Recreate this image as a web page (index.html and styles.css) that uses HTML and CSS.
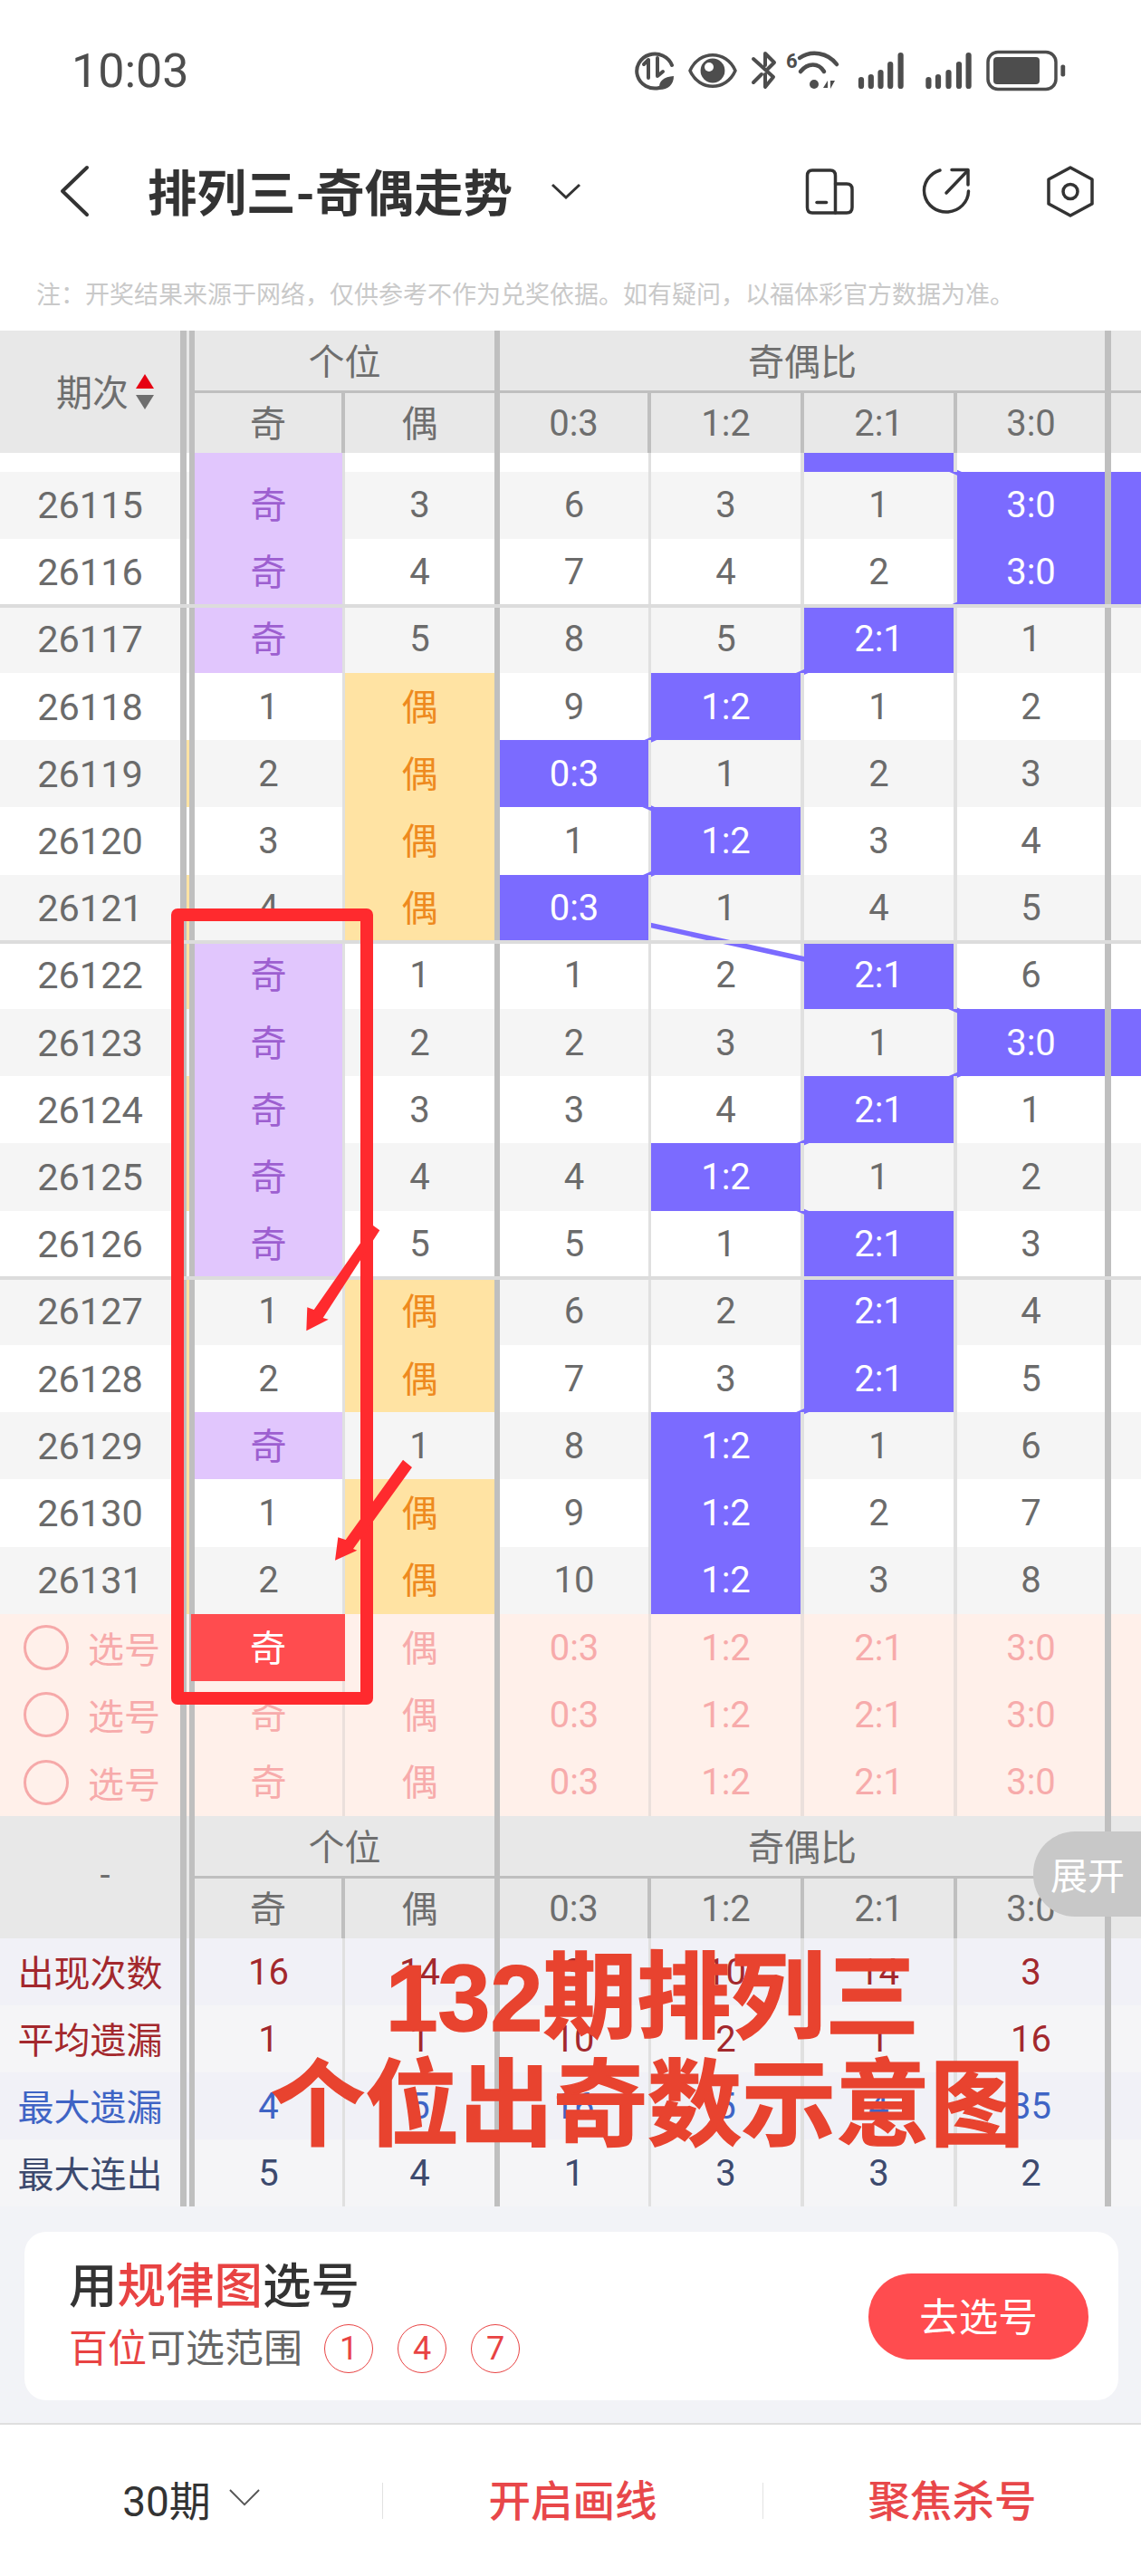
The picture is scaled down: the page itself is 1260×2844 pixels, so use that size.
FILE: index.html
```html
<!DOCTYPE html>
<html lang="zh-CN">
<head>
    <meta charset="UTF-8">
    <meta name="viewport" content="width=device-width, initial-scale=1.0">
    <title>排列三-奇偶走势</title>
    <link rel="stylesheet" href="styles.css">
</head>
<body>
<div class="page">
    <div class="status">
        <span class="time">10:03</span>
        <svg class="status-icons" viewBox="700 50 480 56" width="480" height="56">
            <!-- data saver -->
            <g fill="none" stroke="#4d4d4d" stroke-width="4" stroke-linecap="round" stroke-linejoin="round">
                <path d="M728 97 A20 19 0 1 1 742 72"/>
                <path d="M711 71 L716 66 V86"/>
                <path d="M726 64 V84 L732 79"/>
            </g>
            <path d="M728 99 C727 89 733 85 744 84 C744 93 738 99 728 99 Z" fill="#4d4d4d"/>
            <!-- eye -->
            <path d="M762 78 C772 55 802 55 812 78 C802 101 772 101 762 78 Z" fill="none" stroke="#4d4d4d" stroke-width="3.5" stroke-linejoin="round"/>
            <circle cx="787" cy="78" r="13.4" fill="#4d4d4d"/>
            <circle cx="783" cy="74" r="5" fill="#fff"/>
            <!-- bluetooth -->
            <path d="M832 65 L854 85 L845 96 V82 M832 91 L841 82 M845 72 V59 L855 69 L848 76" fill="none" stroke="#4d4d4d" stroke-width="4" stroke-linecap="round" stroke-linejoin="round"/>
            <!-- wifi -->
            <text x="868" y="75" class="wifi-six">6</text>
            <g fill="none" stroke="#4d4d4d" stroke-width="4.5" stroke-linecap="round">
                <path d="M883 64 C896 55 914 58 924 71"/>
                <path d="M884 79 C892 69 904 69 910 79"/>
            </g>
            <circle cx="899" cy="93" r="5" fill="#4d4d4d"/>
            <path d="M909 97 L914 89 V97 Z M917 89 L922 89 L917 98 Z" fill="#4d4d4d"/>
            <!-- signal -->
            <g fill="none" stroke="#4d4d4d" stroke-width="6.2" stroke-linecap="round">
                <path d="M951 88 V95 M961.8 85 V95 M972.5 80 V95 M983.2 71 V95 M994.6 61 V95"/>
                <path d="M1025.4 88 V95 M1036 85 V95 M1047.5 80 V95 M1059 71 V95 M1069.6 61 V95"/>
            </g>
            <!-- battery -->
            <rect x="1091" y="57.5" width="75" height="41" rx="11" fill="none" stroke="#4d4d4d" stroke-width="3.5"/>
            <rect x="1097" y="63" width="51" height="30" rx="4" fill="#4d4d4d"/>
            <rect x="1171.4" y="71.5" width="4.8" height="13" rx="2" fill="#4d4d4d"/>
        </svg>
    </div>

    <div class="nav">
        <svg class="back" viewBox="0 0 34 58" width="34" height="58">
            <path d="M31 3 L4 29 L31 55" fill="none" stroke="#333" stroke-width="4" stroke-linecap="round" stroke-linejoin="round"/>
        </svg>
        <h1 class="title">排列三-奇偶走势</h1>
        <svg class="drop" viewBox="0 0 34 18" width="34" height="18">
            <path d="M2 2 L17 16 L32 2" fill="none" stroke="#333" stroke-width="3"/>
        </svg>
        <svg class="nav-icons" viewBox="885 180 330 64" width="330" height="64">
            <g fill="none" stroke="#333" stroke-width="3.5" stroke-linecap="round" stroke-linejoin="round">
                <path d="M922.5 236 H897 Q891.5 236 891.5 230 V195 Q891.5 189 897 189 H917 Q922.5 189 922.5 195 V236"/>
                <path d="M922.5 204 H935 Q941 204 941 210 V230 Q941 236 935 236 H922.5"/>
                <path d="M902 224.5 H912.5"/>
                <path d="M1038 189 A24.5 23.5 0 1 0 1069.5 212"/>
                <path d="M1045 214 L1068.5 189.5"/>
                <path d="M1051 188.5 H1069 V205"/>
                <path d="M1182 186 L1206 199 V226 L1182 239 L1158 226 V199 Z"/>
                <circle cx="1182" cy="212.5" r="8"/>
            </g>
        </svg>
    </div>

    <p class="note">注&#xFF1A;开奖结果来源于网络&#xFF0C;仅供参考不作为兑奖依据。如有疑问&#xFF0C;以福体彩官方数据为准。</p>

    <div class="thead">
        <div class="th-period">期次<span class="sort"><i class="up"></i><i class="down"></i></span></div>
        <i class="rail rail-head"></i>
        <div class="th-group g1">个位</div>
        <div class="th-group g2">奇偶比</div>
        <i class="th-group g3"></i>
        <div class="th s1">奇</div><div class="th s2">偶</div><div class="th s3">0:3</div><div class="th s4">1:2</div><div class="th s5">2:1</div><div class="th s6">3:0</div><i class="th s7"></i>
    </div>

    <div class="tbody">
        <div class="row"><div class="c"></div><i class="rail"></i><div class="c odd"></div><div class="c"></div><div class="c"></div><div class="c"></div><div class="c on"></div><div class="c"></div><i class="rest"></i></div>
        <div class="row gray"><div class="c">26115</div><i class="rail"></i><div class="c odd">奇</div><div class="c">3</div><div class="c">6</div><div class="c">3</div><div class="c">1</div><div class="c on">3:0</div><i class="rest on"></i></div>
        <div class="row sep"><div class="c">26116</div><i class="rail"></i><div class="c odd">奇</div><div class="c">4</div><div class="c">7</div><div class="c">4</div><div class="c">2</div><div class="c on">3:0</div><i class="rest on"></i></div>
        <div class="row gray"><div class="c">26117</div><i class="rail"></i><div class="c odd">奇</div><div class="c">5</div><div class="c">8</div><div class="c">5</div><div class="c on">2:1</div><div class="c">1</div><i class="rest"></i></div>
        <div class="row"><div class="c">26118</div><i class="rail"></i><div class="c">1</div><div class="c even">偶</div><div class="c">9</div><div class="c on">1:2</div><div class="c">1</div><div class="c">2</div><i class="rest"></i></div>
        <div class="row gray"><div class="c">26119</div><i class="rail amber"></i><div class="c">2</div><div class="c even">偶</div><div class="c on">0:3</div><div class="c">1</div><div class="c">2</div><div class="c">3</div><i class="rest"></i></div>
        <div class="row"><div class="c">26120</div><i class="rail"></i><div class="c">3</div><div class="c even">偶</div><div class="c">1</div><div class="c on">1:2</div><div class="c">3</div><div class="c">4</div><i class="rest"></i></div>
        <div class="row gray sep"><div class="c">26121</div><i class="rail amber"></i><div class="c">4</div><div class="c even">偶</div><div class="c on">0:3</div><div class="c">1</div><div class="c">4</div><div class="c">5</div><i class="rest"></i></div>
        <div class="row"><div class="c">26122</div><i class="rail amber"></i><div class="c odd">奇</div><div class="c">1</div><div class="c">1</div><div class="c">2</div><div class="c on">2:1</div><div class="c">6</div><i class="rest"></i></div>
        <div class="row gray"><div class="c">26123</div><i class="rail"></i><div class="c odd">奇</div><div class="c">2</div><div class="c">2</div><div class="c">3</div><div class="c">1</div><div class="c on">3:0</div><i class="rest on"></i></div>
        <div class="row"><div class="c">26124</div><i class="rail amber"></i><div class="c odd">奇</div><div class="c">3</div><div class="c">3</div><div class="c">4</div><div class="c on">2:1</div><div class="c">1</div><i class="rest"></i></div>
        <div class="row gray"><div class="c">26125</div><i class="rail amber"></i><div class="c odd">奇</div><div class="c">4</div><div class="c">4</div><div class="c on">1:2</div><div class="c">1</div><div class="c">2</div><i class="rest"></i></div>
        <div class="row sep"><div class="c">26126</div><i class="rail"></i><div class="c odd">奇</div><div class="c">5</div><div class="c">5</div><div class="c">1</div><div class="c on">2:1</div><div class="c">3</div><i class="rest"></i></div>
        <div class="row gray"><div class="c">26127</div><i class="rail amber"></i><div class="c">1</div><div class="c even">偶</div><div class="c">6</div><div class="c">2</div><div class="c on">2:1</div><div class="c">4</div><i class="rest"></i></div>
        <div class="row"><div class="c">26128</div><i class="rail amber"></i><div class="c">2</div><div class="c even">偶</div><div class="c">7</div><div class="c">3</div><div class="c on">2:1</div><div class="c">5</div><i class="rest"></i></div>
        <div class="row gray"><div class="c">26129</div><i class="rail amber"></i><div class="c odd">奇</div><div class="c">1</div><div class="c">8</div><div class="c on">1:2</div><div class="c">1</div><div class="c">6</div><i class="rest"></i></div>
        <div class="row"><div class="c">26130</div><i class="rail amber"></i><div class="c">1</div><div class="c even">偶</div><div class="c">9</div><div class="c on">1:2</div><div class="c">2</div><div class="c">7</div><i class="rest"></i></div>
        <div class="row gray"><div class="c">26131</div><i class="rail amber"></i><div class="c">2</div><div class="c even">偶</div><div class="c">10</div><div class="c on">1:2</div><div class="c">3</div><div class="c">8</div><i class="rest"></i></div>
        <svg class="trend" viewBox="0 0 1260 1282" width="1260" height="1282">
            <polyline points="970,-16.6 1138,57.6 1138,131.8 970,206 801,280.2 634,354.4 801,428.6 634,502.8 970,577 1138,651.2 970,725.4 801,799.6 970,873.8 970,948 970,1022.2 801,1096.4 801,1170.6 801,1244.8" fill="none" stroke="#7b6bff" stroke-width="5.5"/>
        </svg>
    </div>

    <div class="picks">
        <div class="row pick"><div class="c pick-label"><i class="radio"></i>选号</div><i class="rail"></i><div class="c chosen">奇</div><div class="c">偶</div><div class="c">0:3</div><div class="c">1:2</div><div class="c">2:1</div><div class="c">3:0</div><i class="rest"></i></div>
        <div class="row pick"><div class="c pick-label"><i class="radio"></i>选号</div><i class="rail"></i><div class="c">奇</div><div class="c">偶</div><div class="c">0:3</div><div class="c">1:2</div><div class="c">2:1</div><div class="c">3:0</div><i class="rest"></i></div>
        <div class="row pick"><div class="c pick-label"><i class="radio"></i>选号</div><i class="rail"></i><div class="c">奇</div><div class="c">偶</div><div class="c">0:3</div><div class="c">1:2</div><div class="c">2:1</div><div class="c">3:0</div><i class="rest"></i></div>
    </div>

    <div class="thead">
        <div class="th-period">-</div>
        <i class="rail rail-head"></i>
        <div class="th-group g1">个位</div>
        <div class="th-group g2">奇偶比</div>
        <i class="th-group g3"></i>
        <div class="th s1">奇</div><div class="th s2">偶</div><div class="th s3">0:3</div><div class="th s4">1:2</div><div class="th s5">2:1</div><div class="th s6">3:0</div><i class="th s7"></i>
    </div>

    <div class="stats">
        <div class="row stat red"><div class="c">出现次数</div><i class="rail"></i><div class="c">16</div><div class="c">14</div><div class="c">3</div><div class="c">10</div><div class="c">14</div><div class="c">3</div><i class="rest"></i></div>
        <div class="row stat red alt"><div class="c">平均遗漏</div><i class="rail"></i><div class="c">1</div><div class="c">1</div><div class="c">10</div><div class="c">2</div><div class="c">1</div><div class="c">16</div><i class="rest"></i></div>
        <div class="row stat blue"><div class="c">最大遗漏</div><i class="rail"></i><div class="c">4</div><div class="c">5</div><div class="c">16</div><div class="c">5</div><div class="c">4</div><div class="c">35</div><i class="rest"></i></div>
        <div class="row stat slate alt"><div class="c">最大连出</div><i class="rail"></i><div class="c">5</div><div class="c">4</div><div class="c">1</div><div class="c">3</div><div class="c">3</div><div class="c">2</div><i class="rest"></i></div>
    </div>

    <div class="promo-wrap">
        <div class="promo">
            <div class="promo-text">
                <div class="promo-title">用<em>规律图</em>选号</div>
                <div class="promo-sub"><em>百位</em>可选范围<span class="ball">1</span><span class="ball">4</span><span class="ball">7</span></div>
            </div>
            <button class="go">去选号</button>
        </div>
    </div>

    <div class="bottom">
        <div class="tab tab-first">30期
            <svg viewBox="0 0 36 20" width="34" height="19"><path d="M1 1 L18 18 L35 1" fill="none" stroke="#555" stroke-width="2"/></svg>
        </div>
        <div class="tab tab-red">开启画线</div>
        <div class="tab tab-red">聚焦杀号</div>
    </div>

    <!-- 截图上的标注 -->
    <div class="expand">展开</div>
    <div class="box"></div>
    <svg class="arrows" viewBox="0 0 1260 2844" width="1260" height="2844">
        <polygon points="411.7,1352.7 419.3,1358.3 356.7,1455 362.7,1456.7 338.3,1469.3 339.3,1443.3 346.7,1446"/>
        <polygon points="445,1611.7 455,1620 390,1710 394.3,1711.7 370,1722.7 373.3,1697.3 381.7,1700"/>
    </svg>
    <div class="headline"><span class="headline-top">132期排列三</span><br>个位出奇数示意图</div>
</div>
</body>
</html>
```

FILE: styles.css
```css
* {
    margin: 0;
    padding: 0;
    box-sizing: border-box;
}

body {
    font-family: Roboto, "Noto Sans CJK SC", sans-serif;
    background: #fff;
    color: #666;
}

.page {
    position: relative;
    width: 1260px;
    height: 2844px;
    overflow: hidden;
}

/* status bar */
.status {
    height: 132px;
    padding: 50px 80px 0 79px;
    display: flex;
    justify-content: space-between;
}

.time {
    font-size: 52px;
    line-height: 58px;
    color: #4d4d4d;
}

.wifi-six {
    font-size: 22px;
    font-weight: 700;
    fill: #4d4d4d;
}

/* nav */
.nav {
    height: 158px;
    padding: 0 45px 0 65px;
    display: flex;
    align-items: center;
}

.title {
    margin-left: 64px;
    padding-bottom: 4px;
    font-size: 54.5px;
    font-weight: 700;
    color: #333;
    white-space: nowrap;
}

.drop {
    margin-left: 42px;
}

.nav-icons {
    margin-left: auto;
}

.note {
    height: 75px;
    padding-left: 40px;
    font-size: 27px;
    line-height: 72px;
    color: #c9c9c9;
    white-space: nowrap;
}

/* table head */
.thead {
    display: grid;
    grid-template-columns: 199px 16px 166px 171px 167px 169px 169px 170px 33px;
    grid-template-rows: 69px 66px;
    height: 135px;
    background: #e8e8e8;
    font-size: 40px;
    color: #6e6e6e;
}

.th-period {
    grid-row: 1 / 3;
    display: flex;
    align-items: center;
    justify-content: center;
    gap: 8px;
    padding: 0 0 4px 33px;
}

.sort {
    display: flex;
    flex-direction: column;
    gap: 7px;
    margin-top: 4px;
}

.sort i {
    display: block;
    width: 0;
    height: 0;
    border-left: 10px solid transparent;
    border-right: 10px solid transparent;
}

.sort .up {
    border-bottom: 16px solid #e60012;
}

.sort .down {
    border-top: 16px solid #6e6e6e;
}

.rail-head {
    grid-row: 1 / 3;
}

.th-group {
    display: flex;
    align-items: center;
    justify-content: center;
    border-bottom: 3px solid #bfbfbf;
    padding-bottom: 3px;
}

.g1 {
    grid-column: 3 / 5;
    border-right: 6px solid #bfbfbf;
}

.g2 {
    grid-column: 5 / 9;
    border-right: 7px solid #bfbfbf;
}

.g3 {
    grid-column: 9;
}

.th {
    display: flex;
    align-items: center;
    justify-content: center;
    border-right: 4px solid #bfbfbf;
}

.s1,
.s2 {
    padding-bottom: 5px;
}

.s2 {
    border-right-width: 6px;
}

.s6 {
    border-right-width: 7px;
}

.s7 {
    border-right: 0;
}

.rail {
    display: block;
    border-left: 7px solid #bfbfbf;
    border-right: 6px solid #bfbfbf;
}

.rail.amber {
    background: #ffe3a3;
}

/* table body */
.tbody {
    position: relative;
    display: grid;
    grid-template-rows: 20.5px repeat(17, 74.2px);
    height: 1282px;
    overflow: hidden;
}

.row {
    position: relative;
    display: grid;
    grid-template-columns: 199px 16px 166px 171px 167px 169px 169px 170px 33px;
    background: #fff;
    font-size: 40px;
    color: #6b6b6b;
}

.gray {
    background: #f5f5f5;
}

.sep::after {
    content: "";
    position: absolute;
    left: 0;
    right: 0;
    bottom: -2px;
    height: 4px;
    background: #dcdcdc;
    z-index: 3;
}

.c {
    display: flex;
    align-items: center;
    justify-content: center;
    overflow: hidden;
}

.row > .c:first-child {
    font-size: 41.5px;
}

.row > .c:nth-child(3),
.row > .c:nth-child(5),
.row > .c:nth-child(6),
.row > .c:nth-child(7) {
    border-right: 3px solid #e0e0e0;
}

.row > .c:nth-child(6),
.row > .c:nth-child(7) {
    border-right-width: 4px;
}

.row > .c:nth-child(4) {
    border-right: 6px solid #bfbfbf;
}

.row > .c:nth-child(8) {
    border-right: 7px solid #bfbfbf;
}

.odd {
    padding-bottom: 5px;
    background: #e1c6fd;
    color: #9d5fd0;
}

.even {
    padding-bottom: 5px;
    background: #ffe3a3;
    color: #ee8a1e;
}

.on {
    position: relative;
    z-index: 2;
    background: #7b6bff;
    color: #fff;
}

.rest.on {
    display: block;
}

.trend {
    position: absolute;
    left: 0;
    top: 0;
    z-index: 1;
}

/* pick rows */
.picks {
    display: grid;
    grid-template-rows: repeat(3, 74.3px);
    height: 223px;
}

.pick {
    background: #fff0ea;
    color: #f7abab;
}

.row.pick > .c:nth-child(3),
.row.pick > .c:nth-child(4) {
    padding-bottom: 5px;
}

.row.pick > .c:nth-child(3),
.row.pick > .c:nth-child(5),
.row.pick > .c:nth-child(6),
.row.pick > .c:nth-child(7) {
    border-right-color: #ebe0dc;
}

.row.pick > .pick-label {
    justify-content: flex-start;
    padding-left: 26px;
    gap: 21px;
    font-size: 40px;
}

.radio {
    display: block;
    width: 50px;
    height: 50px;
    border: 3px solid #f6a9a9;
    border-radius: 50%;
}

.row.pick > .chosen {
    position: relative;
    margin-left: -4px;
    background: #ff4c4f;
    color: #fff;
    border-right: 0;
    z-index: 2;
}

/* stat rows */
.stats {
    display: grid;
    grid-template-rows: repeat(4, 74px);
    height: 296px;
}

.stat {
    background: #f1f1f7;
}

.stat.alt {
    background: #f5f5f7;
}

.row.stat > .c:first-child {
    padding-bottom: 3px;
    font-size: 40px;
}

.red {
    color: #a3282d;
}

.blue {
    color: #3f64c5;
}

.slate {
    color: #3d4a6e;
}

/* promo card */
.promo-wrap {
    height: 241px;
    padding: 28px 25px 0 27px;
    background: #f2f3f7;
    border-bottom: 2px solid #dedede;
}

.promo {
    height: 186px;
    padding: 0 33px 0 49px;
    background: #fff;
    border-radius: 24px;
    display: flex;
    align-items: center;
    justify-content: space-between;
}

.promo em {
    font-style: normal;
    color: #e84343;
}

.promo-title {
    font-size: 53.5px;
    line-height: 62px;
    font-weight: 500;
    color: #333;
}

.promo-sub {
    margin-top: 10px;
    display: flex;
    align-items: center;
    font-size: 43px;
    line-height: 54px;
    color: #666;
}

.ball {
    width: 54px;
    height: 54px;
    margin-left: 27px;
    border: 1.5px solid #e84343;
    border-radius: 50%;
    display: flex;
    align-items: center;
    justify-content: center;
    font-size: 36px;
    color: #e84343;
}

.ball:first-of-type {
    margin-left: 24px;
}

.go {
    width: 243px;
    height: 95px;
    padding-bottom: 3px;
    border: none;
    border-radius: 48px;
    background: #ff4c4f;
    color: #fff;
    font-family: inherit;
    font-size: 43.5px;
}

/* bottom bar */
.bottom {
    height: 167px;
    display: grid;
    grid-template-columns: 422px 420px 418px;
    align-items: center;
}

.tab {
    height: 40px;
    padding-bottom: 6px;
    display: flex;
    align-items: center;
    justify-content: center;
    font-size: 46px;
    border-left: 1px solid #e2e2e2;
}

.tab-first {
    border-left: 0;
    gap: 20px;
    color: #333;
}

.tab-red {
    color: #e8474a;
    font-size: 46.5px;
    font-weight: 500;
}

/* overlays */
.expand {
    position: absolute;
    left: 1141px;
    top: 2022px;
    width: 119px;
    height: 94px;
    padding: 0 0 3px 19px;
    display: flex;
    align-items: center;
    background: #c8c8c8;
    border-radius: 46px 0 0 46px;
    color: #fff;
    font-size: 41px;
    white-space: nowrap;
    z-index: 5;
}

.box {
    position: absolute;
    left: 189px;
    top: 1003px;
    width: 223px;
    height: 879px;
    border: 14px solid #ff2a2e;
    border-radius: 7px;
    z-index: 5;
}

.arrows {
    position: absolute;
    left: 0;
    top: 0;
    fill: #ff2a2e;
    z-index: 5;
}

.headline {
    position: absolute;
    left: 299px;
    top: 2147px;
    width: 829px;
    text-align: center;
    font-family: "Liberation Sans", "Noto Sans CJK SC", sans-serif;
    font-size: 104px;
    line-height: 119px;
    font-weight: 700;
    color: #e8432f;
    -webkit-text-stroke: 1.5px #e8432f;
    white-space: nowrap;
    z-index: 6;
}

.headline-top {
    padding-left: 14px;
}
```
